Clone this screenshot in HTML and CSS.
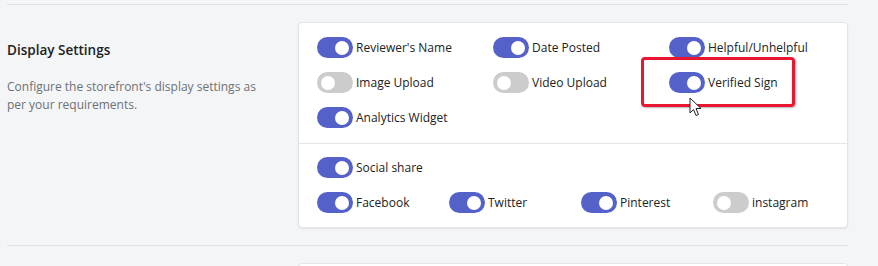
FILE: index.html
```html
<!DOCTYPE html>
<html lang="en">
<head>
  <meta charset="UTF-8" />
  <title>Display Settings</title>
  <link rel="stylesheet" href="styles.css">
</head>
<body>

  <div class="section">
    <div class="info">
      <h3>Display Settings</h3>
      <p>Configure the storefront's display settings as per your requirements.</p>
    </div>

    <div class="card">
      <div class="card-part grid-3">
        <label class="switch on"><span class="knob"></span>Reviewer's Name</label>
        <label class="switch on"><span class="knob"></span>Date Posted</label>
        <label class="switch on"><span class="knob"></span>Helpful/Unhelpful</label>
        <label class="switch"><span class="knob"></span>Image Upload</label>
        <label class="switch"><span class="knob"></span>Video Upload</label>
        <label class="switch on highlight"><span class="knob"></span>Verified Sign
          <svg class="cursor" width="13" height="20" viewBox="0 0 13 20">
            <path d="M1 1 L1 16 L4.5 12.5 L7 18.5 L9.5 17.5 L7 11.5 L12 11.5 Z" fill="#fff" stroke="#222" stroke-width="1"/>
          </svg>
        </label>
        <label class="switch on"><span class="knob"></span>Analytics Widget</label>
      </div>
      <div class="card-part social">
        <label class="switch on"><span class="knob"></span>Social share</label>
        <div class="grid-4">
          <label class="switch on"><span class="knob"></span>Facebook</label>
          <label class="switch on"><span class="knob"></span>Twitter</label>
          <label class="switch on"><span class="knob"></span>Pinterest</label>
          <label class="switch"><span class="knob"></span>instagram</label>
        </div>
      </div>
    </div>
  </div>

  <div class="section">
    <div class="info"></div>
    <div class="card card-next"></div>
  </div>

</body>
</html>
```

FILE: styles.css
```css
body {
  margin: 0;
  padding: 4px 30px 0 7px;
  background-color: #f4f5f7;
  font-family: 'Open Sans', 'Noto Sans', sans-serif;
  color: #202223;
  overflow: hidden;
}

.section {
  width: 841px;
  display: flex;
  border-top: 1px solid #e0e2e5;
  padding: 17px 0;
}

.info {
  width: 291px;
  flex-shrink: 0;
  padding-top: 19px;
}

.info h3 {
  margin: 0;
  font-size: 13.5px;
  font-weight: 600;
  line-height: 18px;
}

.info p {
  margin: 19px 0 0;
  width: 260px;
  font-size: 12px;
  line-height: 17.5px;
  color: #6d7175;
}

.card {
  flex: 1;
  min-width: 0;
  background: white;
  border: 1px solid #e3e5e8;
  border-radius: 4px;
  box-shadow: 0 1px 2px rgba(0,0,0,0.08);
}

.card-next {
  height: 40px;
}

.card-part {
  padding: 14px 18px 15px;
  display: flex;
  flex-direction: column;
  gap: 14px;
}

.card-part + .card-part {
  border-top: 1px solid #e3e5e8;
}

.social {
  padding-top: 13px;
  padding-bottom: 14px;
}

.grid-3 {
  display: grid;
  grid-template-columns: 176px 176px 1fr;
  column-gap: 0;
  row-gap: 14px;
}

.grid-4 {
  display: grid;
  grid-template-columns: 132px 132px 132px 1fr;
}

.switch {
  position: relative;
  display: flex;
  align-items: center;
  height: 21px;
  font-size: 12px;
  white-space: nowrap;
}

.knob {
  width: 36px;
  height: 21px;
  margin-right: 3px;
  border-radius: 11px;
  background-color: #cccccc;
  position: relative;
  flex-shrink: 0;
}

.knob::after {
  content: "";
  position: absolute;
  top: 3.5px;
  left: 4px;
  width: 14px;
  height: 14px;
  border-radius: 50%;
  background: white;
}

.switch.on .knob {
  background-color: #5461c8;
}

.switch.on .knob::after {
  left: 18px;
}

.highlight::before {
  content: "";
  position: absolute;
  left: -28px;
  top: -15px;
  width: 148px;
  height: 44px;
  border: 3px solid #e8172f;
  border-radius: 4px;
  box-shadow: 1px 1px 2px rgba(0,0,0,0.3);
}

.cursor {
  position: absolute;
  left: 20px;
  top: 25px;
}
```
